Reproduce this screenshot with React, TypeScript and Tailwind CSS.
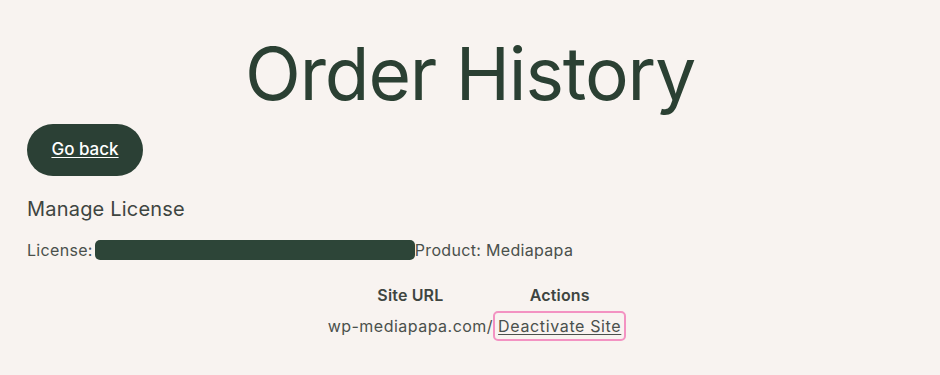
export default function App() {
  return (
    <div className="min-h-[375px] w-full bg-[#f8f3f0] px-[27px] text-[#2b3f33] [font-family:Inter,'Noto_Sans',sans-serif]">
      <h1 className="pt-[30px] text-center text-[73px] font-normal leading-[88px] tracking-[-0.015em] text-[#2b4033]">
        Order History
      </h1>
      <div className="mt-[6px]">
        <a
          href="#"
          className="inline-flex h-[52px] w-[116px] items-center justify-center rounded-full bg-[#2b4035] text-[17px] font-medium text-white underline underline-offset-2"
        >
          Go back
        </a>
      </div>
      <h2 className="mt-[20px] text-[20px] font-normal leading-[26px] tracking-[0.01em] text-[#3e4541]">
        Manage License
      </h2>
      <div className="mt-[16px] flex items-center text-[16px] tracking-[0.02em] text-[#4a504c]">
        <span>License:</span>
        <span className="ml-[2px] inline-block h-[20px] w-[320px] rounded-[5px] bg-[#2d4538]"></span>
        <span>Product: Mediapapa</span>
      </div>
      <div className="mt-[21px] flex justify-center pl-[14px]">
        <table className="text-[16px] tracking-[0.03em] text-[#4a504c]">
          <thead>
            <tr>
              <th className="px-[8px] pb-[4px] font-semibold tracking-[0.01em] text-[#3e4541]">Site URL</th>
              <th className="px-[8px] pb-[4px] font-semibold tracking-[0.01em] text-[#3e4541]">Actions</th>
            </tr>
          </thead>
          <tbody>
            <tr>
              <td className="px-0 text-right">wp-mediapapa.com/</td>
              <td className="px-0 text-left">
                <a
                  href="#"
                  className="inline-block rounded-[5px] border-2 border-[#f392c2] px-[3px] py-[1px] tracking-[0.04em] underline underline-offset-2"
                >
                  Deactivate Site
                </a>
              </td>
            </tr>
          </tbody>
        </table>
      </div>
    </div>
  );
}
